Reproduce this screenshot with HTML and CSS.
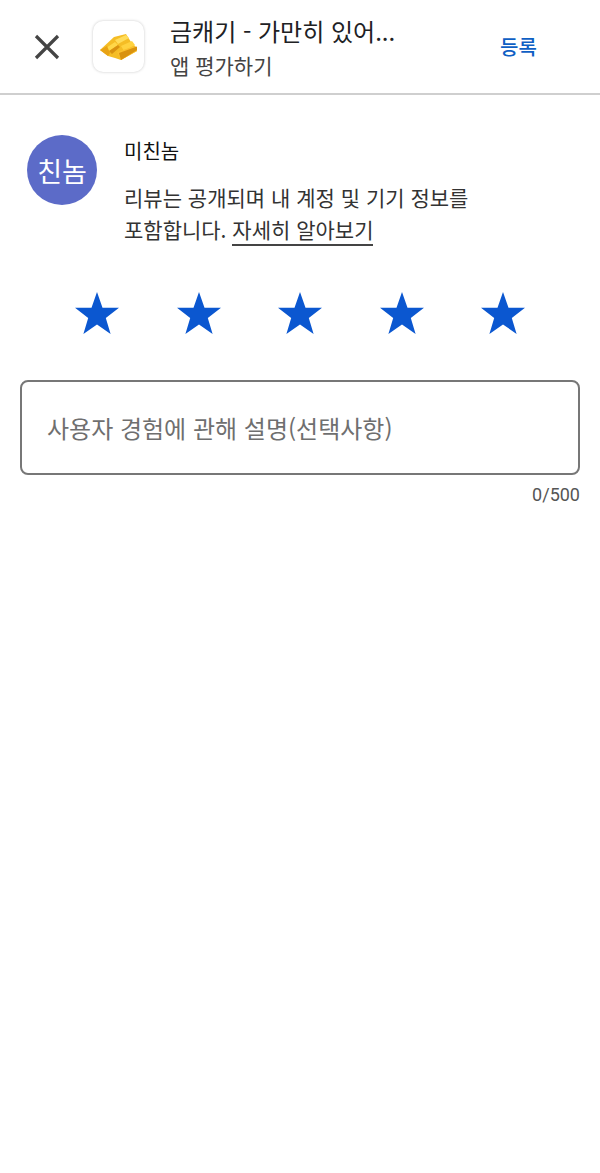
FILE: index.html
```html
<!DOCTYPE html>
<html lang="ko">
<head>
<meta charset="utf-8">
<title>앱 평가하기</title>
<link rel="stylesheet" href="styles.css">
</head>
<body>
<header class="topbar">
  <svg class="close" viewBox="0 0 26 26" width="26" height="26"><path d="M2 2L24 24M24 2L2 24" stroke="#444" stroke-width="3.2" fill="none"/></svg>
  <div class="appicon">
    <svg viewBox="0 0 40 30" width="40" height="30">
      <path d="M1 18L15 5L27 2L32 10L37 15L38 19L22 28L16 26L9 24Z" fill="#f5bd25"/>
      <path d="M16 8L27 3L30 6L19 12Z" fill="#ffdc5a"/>
      <path d="M7 16L16 10L19 13L10 19Z" fill="#ffd748"/>
      <path d="M22 14L33 9L36 13L25 19Z" fill="#ffd23f"/>
      <path d="M18 20L36 14L38 19L22 28Z" fill="#fbc02d"/>
      <path d="M10 19L19 13L21 15L13 22ZM22 28L20 21L38 14.5L38 18Z" fill="#d9920f"/>
      <path d="M1 18L8 14L11 21L9 24Z" fill="#e8a315"/>
    </svg>
  </div>
  <div class="titles">
    <div class="title">금캐기 - 가만히 있어...</div>
    <div class="subtitle">앱 평가하기</div>
  </div>
  <div class="submit">등록</div>
</header>
<section class="profile">
  <div class="avatar">친놈</div>
  <div class="info">
    <div class="name">미친놈</div>
    <p class="notice">리뷰는 공개되며 내 계정 및 기기 정보를<br>포함합니다. <span class="link">자세히 알아보기</span></p>
  </div>
</section>
<div class="stars">
  <svg class="star" viewBox="0 0 44 42"><path d="M22 0L27.5 15.8H44L30.8 25.9L35.6 42L22 32.4L8.4 42L13.2 25.9L0 15.8H16.5Z"/></svg>
  <svg class="star" viewBox="0 0 44 42"><path d="M22 0L27.5 15.8H44L30.8 25.9L35.6 42L22 32.4L8.4 42L13.2 25.9L0 15.8H16.5Z"/></svg>
  <svg class="star" viewBox="0 0 44 42"><path d="M22 0L27.5 15.8H44L30.8 25.9L35.6 42L22 32.4L8.4 42L13.2 25.9L0 15.8H16.5Z"/></svg>
  <svg class="star" viewBox="0 0 44 42"><path d="M22 0L27.5 15.8H44L30.8 25.9L35.6 42L22 32.4L8.4 42L13.2 25.9L0 15.8H16.5Z"/></svg>
  <svg class="star" viewBox="0 0 44 42"><path d="M22 0L27.5 15.8H44L30.8 25.9L35.6 42L22 32.4L8.4 42L13.2 25.9L0 15.8H16.5Z"/></svg>
</div>
<div class="field">
  <div class="inputbox">사용자 경험에 관해 설명(선택사항)</div>
  <div class="counter">0/500</div>
</div>
</body>
</html>
```
FILE: styles.css
```css
* { box-sizing: border-box; }
html, body { margin: 0; padding: 0; }
body {
  width: 600px;
  height: 1173px;
  background: #fff;
  overflow: hidden;
  font-family: "Noto Sans CJK KR", "Noto Sans", sans-serif;
  color: #202124;
}
.topbar {
  display: flex;
  align-items: center;
  height: 95px;
  border-bottom: 2px solid #cfcfcf;
  padding-left: 34px;
}
.close { flex: none; margin-right: 33px; }
.appicon {
  flex: none;
  width: 51px;
  height: 51px;
  border-radius: 10px;
  background: #fff;
  box-shadow: 0 0 3px rgba(0,0,0,.22);
  display: flex;
  align-items: center;
  justify-content: center;
  margin-right: 26px;
}
.titles { flex: none; width: 300px; }
.title { font-size: 24px; line-height: 34px; color: #202124; }
.subtitle { font-size: 21px; line-height: 30px; color: #444; margin-top: 2px; }
.submit { font-size: 20px; font-weight: 500; color: #0f5fc4; margin-left: 30px; margin-top: -1px; }
.profile {
  display: flex;
  padding: 40px 0 0 27px;
}
.avatar {
  flex: none;
  width: 70px;
  height: 70px;
  border-radius: 50%;
  background: #5c6bc8;
  color: #fff;
  font-size: 27px;
  display: flex;
  align-items: center;
  justify-content: center;
  margin-right: 27px;
}
.name { font-size: 20px; line-height: 32px; color: #111; }
.notice { margin: 14px 0 0; font-size: 21px; line-height: 32px; color: #333; }
.link { border-bottom: 2px solid #444; }
.stars {
  display: flex;
  gap: 57.6px;
  padding: 47px 0 0 75px;
}
.star { width: 44px; height: 42px; fill: #0b57d0; flex: none; }
.field { padding: 46px 20px 0; }
.inputbox {
  height: 95px;
  border: 2px solid #777;
  border-radius: 8px;
  padding: 0 25px;
  display: flex;
  align-items: center;
  font-size: 24px;
  color: #6f6f6f;
}
.counter { text-align: right; font-family: "Roboto", sans-serif; font-size: 18px; color: #555; margin-top: 9px; }
```
